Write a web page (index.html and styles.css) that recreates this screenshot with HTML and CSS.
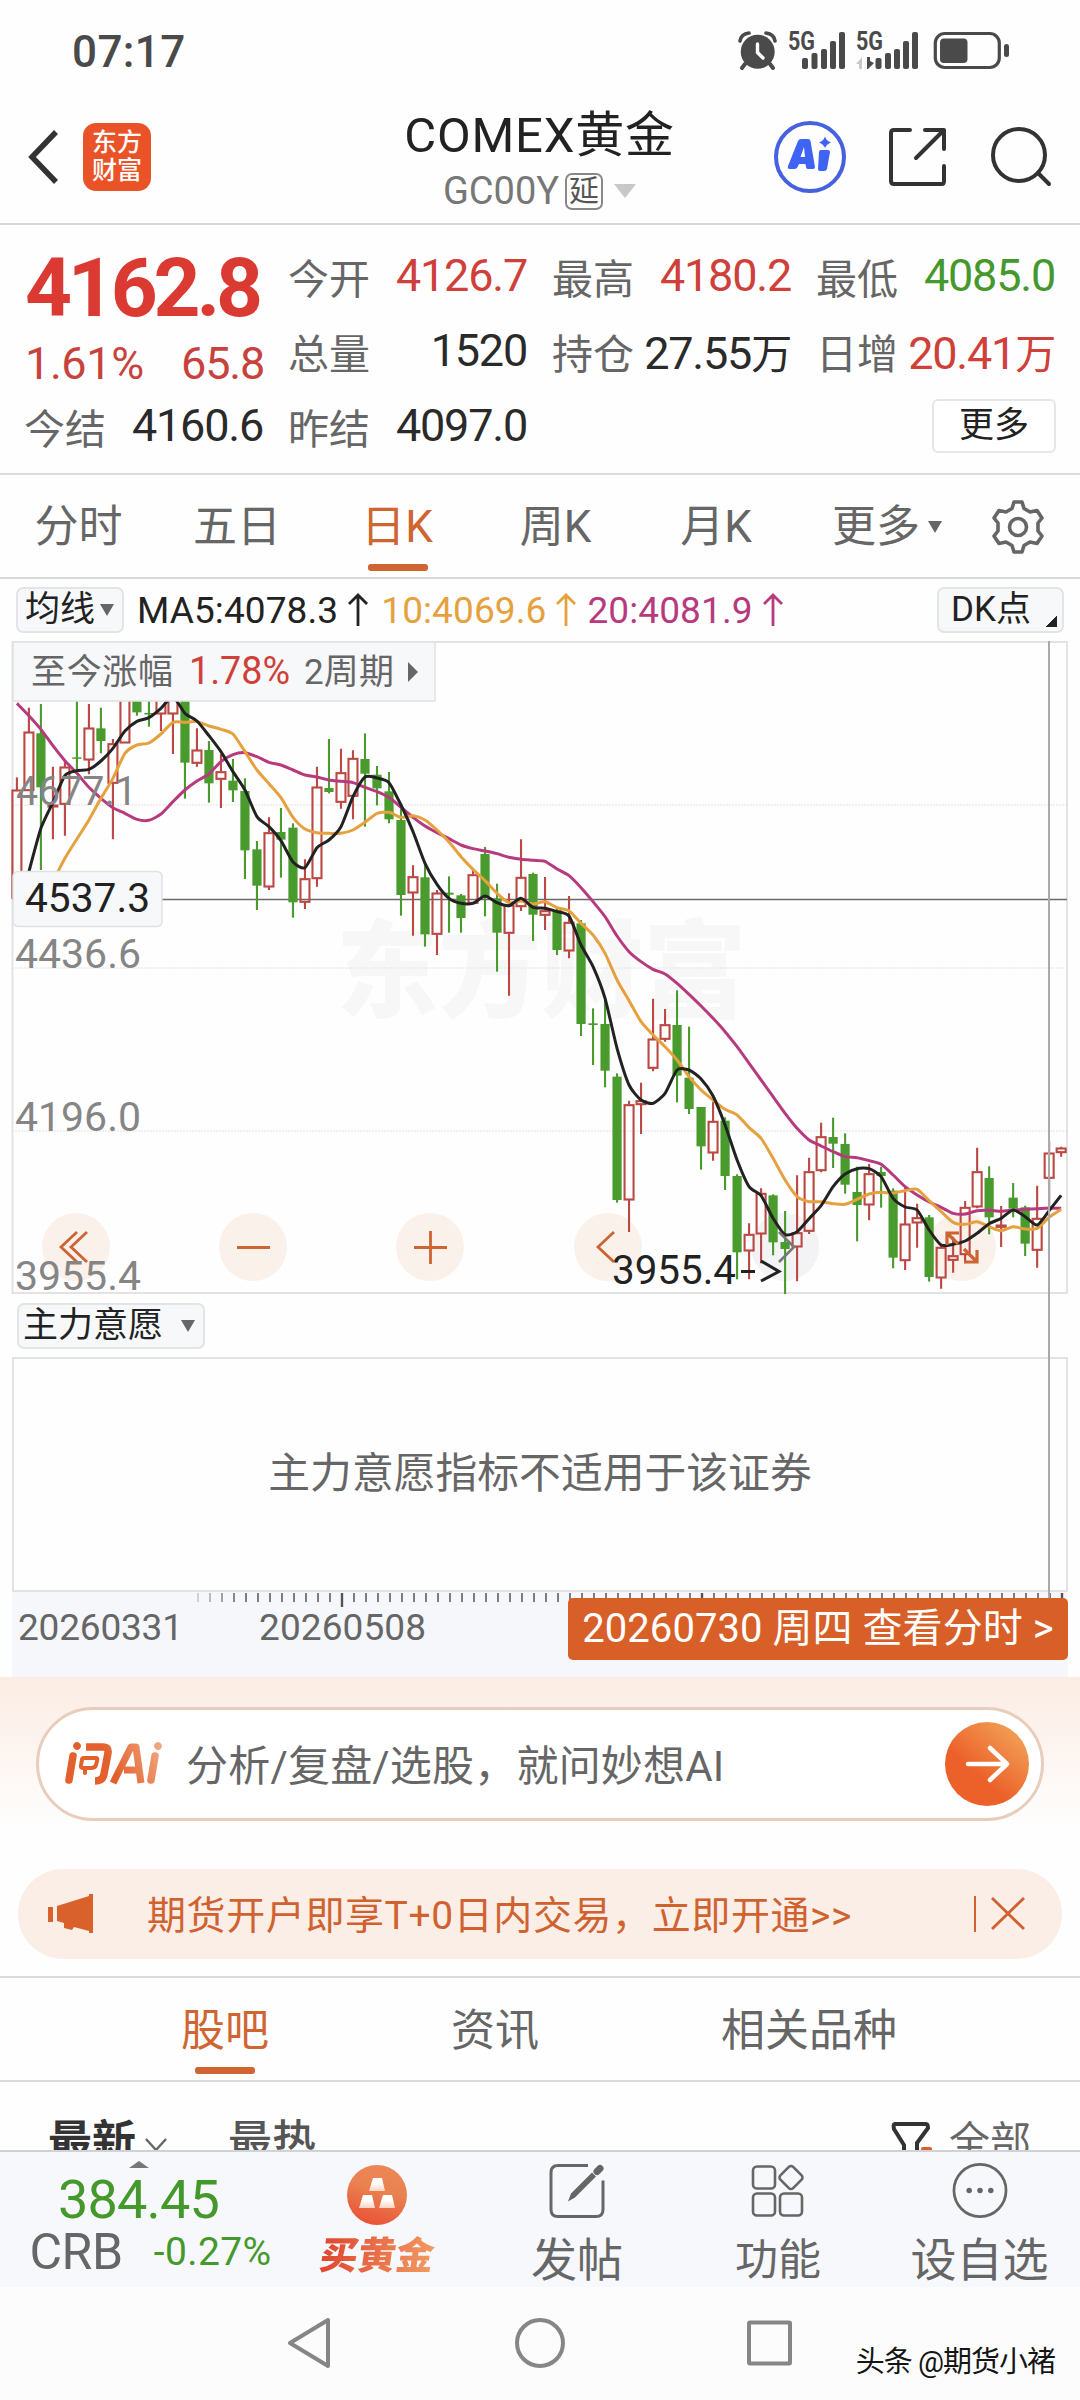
FILE: index.html
```html
<!DOCTYPE html>
<html lang="zh-CN">
<head>
<meta charset="utf-8">
<title>COMEX黄金</title>
<link rel="stylesheet" href="styles.css">
</head>
<body>
<div class="screen">
  <div class="status">
    <span class="clock">07:17</span>
    <svg class="status-icons" width="272" height="42" viewBox="0 0 272 42" fill="#4a4a4a">
      <circle cx="19.7" cy="21.7" r="17"/>
      <path d="M2 11Q3 4 11 3M37 11Q36 4 28 3" fill="none" stroke="#4a4a4a" stroke-width="3.6" stroke-linecap="round"/>
      <path d="M7 34L4 38M32 34L35 38" stroke="#4a4a4a" stroke-width="4" stroke-linecap="round"/>
      <path d="M19.5 14V22.5L25 28" fill="none" stroke="#fff" stroke-width="3.4" stroke-linecap="round"/>
      <text x="50" y="20" class="net" textLength="27" lengthAdjust="spacingAndGlyphs">5G</text>
      <rect x="64" y="28" width="6" height="11" rx="2"/><rect x="73.500" y="23" width="6" height="16" rx="2"/><rect x="83" y="19" width="6" height="20" rx="2"/><rect x="92" y="11" width="6" height="28" rx="2"/><rect x="101" y="2" width="6" height="37" rx="2"/>
      <text x="118" y="20" class="net" textLength="27" lengthAdjust="spacingAndGlyphs">5G</text>
      <path d="M118 34L124 27V39H121V34Z" fill="#c8c8c8"/><path d="M129 27H132V31L136 33L130 39H129Z"/>
      <rect x="137.500" y="28" width="6" height="11" rx="2"/><rect x="147" y="23" width="6" height="16" rx="2"/><rect x="156" y="19" width="6" height="20" rx="2"/><rect x="165" y="11" width="6" height="28" rx="2"/><rect x="174" y="2" width="6" height="37" rx="2"/>
      <rect x="197.300" y="3.500" width="64" height="34" rx="9.500" fill="none" stroke="#4a4a4a" stroke-width="3.200"/>
      <rect x="202" y="8.500" width="27.500" height="24.500" rx="4"/><rect x="266" y="14" width="5" height="13" rx="2.500"/>
    </svg>
  </div>

  <header class="header">
    <div class="header-left">
      <svg width="34" height="58" viewBox="0 0 34 58"><path d="M29 4L5 29L29 54" fill="none" stroke="#333" stroke-width="5.500"/></svg>
      <div class="brand"><span>东方</span><span>财富</span></div>
    </div>
    <div class="title">
      <h1>COMEX黄金</h1>
      <div class="code"><span class="code-text">GC00Y</span><span class="delay">延</span><i class="tri"></i></div>
    </div>
    <div class="header-right">
      <svg width="72" height="72" viewBox="0 0 72 72"><circle cx="36" cy="36" r="34" fill="none" stroke="#4561dd" stroke-width="4"/>
        <path fill="#3f63f3" fill-rule="evenodd" d="M24 20Q25 18 27 18H34Q36 18 36.500 20L41 46Q41 48 39 48H34Q32 48 32 46L31.500 43H25L23 47Q22 48 20 48H16Q13 48 14 45ZM30 26L26.500 36H31ZM47 29H54Q56 29 56 31L53 48Q52.500 50 50 50H46Q44 50 44 48L45 31Q45 29 47 29ZM51 15.500Q52.500 20 57 21.500Q52.500 23 51 27Q49.500 23 45 21.500Q49.500 20 51 15.500Z"/></svg>
      <svg width="62" height="62" viewBox="0 0 62 62" fill="none" stroke="#333" stroke-width="4" stroke-linecap="round" stroke-linejoin="round"><path d="M23 4H7Q4 4 4 7V55Q4 58 7 58H55Q57 58 57 55V40M38 4H57V23M56 5L29 32"/></svg>
      <svg width="62" height="62" viewBox="0 0 62 62" fill="none" stroke="#333" stroke-width="4" stroke-linecap="round"><circle cx="29" cy="29" r="26"/><path d="M48 47L59 58"/></svg>
    </div>
  </header>

  <section class="quote">
    <div class="last">
      <div class="price">4162.8</div>
      <div class="change"><span class="percent">1.61%</span><span>65.8</span></div>
    </div>
    <div class="cell"><span>今开</span><b class="up">4126.7</b></div>
    <div class="cell"><span>最高</span><b class="up">4180.2</b></div>
    <div class="cell"><span>最低</span><b class="down">4085.0</b></div>
    <div class="cell"><span>总量</span><b>1520</b></div>
    <div class="cell"><span>持仓</span><b>27.55<em>万</em></b></div>
    <div class="cell"><span>日增</span><b class="up">20.41<em>万</em></b></div>
    <div class="cell"><span>今结</span><b>4160.6</b></div>
    <div class="cell"><span>昨结</span><b>4097.0</b></div>
    <button class="more">更多</button>
  </section>

  <nav class="periods">
    <span>分时</span><span>五日</span><span class="on">日K</span><span>周K</span><span>月K</span>
    <span class="more-period">更多<i class="tri small"></i></span>
    <span class="gear"><svg width="56" height="56" viewBox="0 0 56 56" fill="none" stroke="#666" stroke-width="3.600" stroke-linejoin="round"><path d="M24 3H32L34 9.500L40 13L47 11.500L52 19L48 24V32L52 37L47 44.500L40 43L34 46.500L32 53H24L22 46.500L16 43L9 44.500L4 37L8 32V24L4 19L9 11.500L16 13L22 9.500Z"/><circle cx="28" cy="28" r="8.500"/></svg></span>
  </nav>

  <section class="chart">
    <div class="ma-row">
      <span class="pill">均线<i class="tri small"></i></span>
      <span class="ma ma5">MA5:4078.3<svg class="arrow" viewBox="0 0 20 34"><path d="M10 33V2M1 11L10 2L19 11"/></svg></span>
      <span class="ma ma10">10:4069.6<svg class="arrow" viewBox="0 0 20 34"><path d="M10 33V2M1 11L10 2L19 11"/></svg></span>
      <span class="ma ma20">20:4081.9<svg class="arrow" viewBox="0 0 20 34"><path d="M10 33V2M1 11L10 2L19 11"/></svg></span>
      <span class="pill dk">DK点<i class="corner"></i></span>
    </div>

    <svg class="kline" width="1080" height="654" viewBox="0 641 1080 654">
      <text x="336" y="1009" class="watermark" textLength="410" lengthAdjust="spacingAndGlyphs">东方财富</text>
      <g stroke="#ececec" stroke-width="1.500" stroke-dasharray="2 1"><path d="M12 805H1067M12 968H1067M12 1131H1067"/></g>
      <rect x="12.500" y="642" width="1054.500" height="651" fill="none" stroke="#e3e3e3" stroke-width="2"/>
      <g fill="#fbf1eb"><circle cx="76" cy="1247" r="34"/><circle cx="253" cy="1247" r="34"/><circle cx="430" cy="1247" r="34"/><circle cx="608" cy="1247" r="34"/><circle cx="962" cy="1247" r="34"/></g>
      <circle cx="785" cy="1247" r="34" fill="#f3f3f6"/>
      <path d="M12 899.500H1067" stroke="#6a6a6a" stroke-width="1.300"/>
      <g id="candles"></g>
      <g id="averages" fill="none" stroke-width="3" stroke-linejoin="round"></g>
      <g fill="none" stroke="#cc6433" stroke-width="2.800">
        <path d="M77 1232L61 1247L77 1262M87 1232L71 1247L87 1262M237 1247.500H270M414 1247.500H447M430.500 1231V1264M614 1232L598 1247L614 1262"/>
        <path d="M959 1233H947V1245M947 1233L958 1244M977 1250V1262H964M977 1262L964 1249" stroke-width="3.200"/>
      </g>
      <path d="M779 1232L794 1247L779 1262" fill="none" stroke="#777" stroke-width="2.600"/>
      <g class="axis">
        <text x="16" y="805" textLength="121" lengthAdjust="spacingAndGlyphs">4677.1</text>
        <text x="15" y="968" textLength="126" lengthAdjust="spacingAndGlyphs">4436.6</text>
        <text x="15" y="1131" textLength="126" lengthAdjust="spacingAndGlyphs">4196.0</text>
        <text x="15" y="1290" textLength="126" lengthAdjust="spacingAndGlyphs">3955.4</text>
      </g>
      <text x="612" y="1284" class="low" textLength="124" lengthAdjust="spacingAndGlyphs">3955.4</text>
      <path d="M741 1271.500H755M761 1261L779 1271.500L761 1281" fill="none" stroke="#222" stroke-width="3"/>
      <rect x="13" y="642" width="422" height="59" fill="#f7f8fa" stroke="#e0e1e3" stroke-width="1.500"/>
      <g class="gain">
        <text x="31" y="684" textLength="142">至今涨幅</text>
        <text x="189" y="684" class="gain-value" textLength="101" lengthAdjust="spacingAndGlyphs">1.78%</text>
        <text x="304" y="684" textLength="90">2周期</text>
      </g>
      <path d="M408 662L418 672L408 682Z" fill="#666"/>
      <rect x="13" y="871.500" width="149" height="55" rx="5" fill="#f7f8fa" stroke="#dfe1e5" stroke-width="1.500"/>
      <text x="25" y="912" class="cross-price" textLength="125" lengthAdjust="spacingAndGlyphs">4537.3</text>
    </svg>

    <div class="indicator-row"><span class="pill">主力意愿<i class="tri small"></i></span></div>
    <div class="sub-chart">主力意愿指标不适用于该证券</div>
    <div class="dates">
      <svg class="ticks" id="ticks" width="1055" height="20" viewBox="12 0 1055 20"></svg>
      <span class="date-first">20260331</span><span class="date-second">20260508</span>
      <span class="date-badge">20260730 周四 查看分时 &gt;</span>
    </div>
    <i class="crosshair"></i>
  </section>

  <section class="ask">
    <div class="ask-box">
      <svg width="124" height="52" viewBox="62 1738 124 52">
        <defs><linearGradient id="ask-ink" gradientUnits="userSpaceOnUse" x1="66" y1="1790" x2="165" y2="1738"><stop offset=".45" stop-color="#e35f2b"/><stop offset="1" stop-color="#f3b38e"/></linearGradient></defs>
        <g fill="none" stroke="url(#ask-ink)" stroke-width="7.500" stroke-linecap="round">
          <path d="M73 1756L69 1780M77 1746L77.100 1746.100"/>
          <path d="M86 1747H103Q109 1747 108 1753L104 1774Q103 1781 95 1781" stroke-linecap="butt"/>
          <path d="M84 1758H96Q98 1758 97 1761L96 1765Q95 1768 91 1768H83Q80 1768 81 1765L82 1760Q82 1758 84 1758ZM85 1768V1773" stroke-width="4"/>
          <path d="M113 1783L131 1747H136L141 1783M124 1770H139" stroke-width="7" stroke-linecap="butt" stroke-linejoin="round"/>
          <path d="M155 1756L151 1780M158 1746L158.100 1746.100"/>
        </g>
      </svg>
      <span class="ask-text">分析/复盘/选股，就问妙想AI</span>
      <svg class="go" width="84" height="84" viewBox="0 0 84 84"><defs><linearGradient id="go-fill" x1=".2" y1=".9" x2=".9" y2=".1"><stop offset=".3" stop-color="#ec6029"/><stop offset="1" stop-color="#f2a257"/></linearGradient></defs><circle cx="42" cy="42" r="42" fill="url(#go-fill)"/><path d="M23 42H61M45 26L62 42L45 58" fill="none" stroke="#fff" stroke-width="4.500" stroke-linecap="round" stroke-linejoin="round"/></svg>
    </div>
  </section>

  <section class="banner">
    <svg width="46" height="40" viewBox="0 0 46 40" fill="#d9612c"><path d="M0 13H5V28H0ZM9 12L41 2V0H45V39H41V37L26 33L24 36L16 34V29L9 27Z"/></svg>
    <span class="banner-text">期货开户即享T+0日内交易，立即开通&gt;&gt;</span>
    <i class="bar"></i>
    <svg width="34" height="32" viewBox="0 0 34 32"><path d="M1 0L33 31M33 0L1 31" stroke="#d0622f" stroke-width="2.800"/></svg>
  </section>

  <nav class="topics"><span class="on">股吧</span><span>资讯</span><span>相关品种</span></nav>

  <div class="filters">
    <b>最新</b><svg width="22" height="14" viewBox="0 0 22 14"><path d="M1 1L11 12L21 1" fill="none" stroke="#666" stroke-width="2.400"/></svg>
    <b class="hot">最热</b>
    <svg class="funnel" width="44" height="44" viewBox="0 0 44 44"><path d="M5 3H36Q38 3 38 7L27 22V42M5 3Q3 3 4 8L14 24V42" fill="none" stroke="#333" stroke-width="4"/><rect x="31" y="26" width="11" height="5" rx="2" fill="#d9612c"/></svg>
    <span>全部</span>
  </div>

  <footer class="toolbar">
    <div class="index"><i class="up-tri"></i><div class="index-value">384.45</div><div class="index-line"><span>CRB</span><em>-0.27%</em></div></div>
    <div class="tool gold"><svg width="60" height="60" viewBox="0 0 60 60"><defs><linearGradient id="gold-fill" x1=".3" y1="1" x2=".6" y2="0"><stop offset="0" stop-color="#ea5035"/><stop offset=".6" stop-color="#e98150"/><stop offset="1" stop-color="#ec8855"/></linearGradient><linearGradient id="bar-fill" x1="0" y1="0" x2="0" y2="1"><stop offset=".4" stop-color="#fff"/><stop offset="1" stop-color="#fbd3c0"/></linearGradient></defs><circle cx="30" cy="30" r="30" fill="url(#gold-fill)"/><g fill="url(#bar-fill)"><path d="M26 13H35L38 26H22Z"/><path d="M16 30H25L28 43H12Z"/><path d="M36 30H45L48 43H32Z"/></g></svg><span>买黄金</span></div>
    <div class="tool"><svg width="56" height="56" viewBox="0 0 56 56" fill="none" stroke="#666" stroke-width="3"><path d="M39 3H9Q2 3 2 10V47Q2 54 9 54H47Q54 54 54 47V18"/><path d="M19 39L22 31L43 10L47 14L26 35Z" fill="#666" stroke="none"/><path d="M48 9L51 6" stroke-width="7" stroke-linecap="round"/></svg><span>发帖</span></div>
    <div class="tool feature"><svg width="56" height="56" viewBox="0 0 56 56" fill="none" stroke="#666" stroke-width="2.600"><rect x="3" y="4" width="22" height="22" rx="4"/><rect x="3" y="31" width="22" height="22" rx="4"/><rect x="30" y="31" width="22" height="22" rx="4"/><rect x="32" y="6" width="18" height="18" rx="3" transform="rotate(45 41 15)"/></svg><span>功能</span></div>
    <div class="tool"><svg width="58" height="58" viewBox="0 0 58 58"><circle cx="29" cy="29" r="26.500" fill="none" stroke="#666" stroke-width="2.800"/><g fill="#666"><circle cx="18" cy="29" r="2.800"/><circle cx="29" cy="29" r="2.800"/><circle cx="40" cy="29" r="2.800"/></g></svg><span>设自选</span></div>
  </footer>

  <div class="system">
    <svg width="504" height="60" viewBox="288 2313 504 60" fill="none" stroke="#868686" stroke-width="4" stroke-linejoin="round"><path d="M328 2320V2366L290 2343Z"/><circle cx="540" cy="2343" r="23"/><rect x="749" y="2322.500" width="41" height="41" rx="1"/></svg>
    <span class="credit">头条 @期货小褚</span>
  </div>
</div>
<script src="chart.js"></script>
</body>
</html>
```
FILE: styles.css
```css
* { box-sizing: border-box; }
body { margin: 0; background: #fff; font-family: Roboto, "Noto Sans CJK SC", sans-serif; color: #222; }
i, em { font-style: normal; }
svg { display: block; flex: none; overflow: visible; }
.screen { width: 1080px; height: 2400px; overflow: hidden; display: flex; flex-direction: column; background: #fefefe; }
.screen > * { flex: none; }

.status { height: 100px; padding: 0 71px 0 72px; display: flex; justify-content: space-between; align-items: flex-start; }
.clock { font-size: 44px; font-weight: 500; line-height: 50px; margin-top: 27px; color: #4a4a4a; letter-spacing: .4px; }
.status-icons { margin-top: 30px; position: relative; left: 1px; }
.net { font-size: 25px; font-weight: 700; }

.header { height: 125px; border-bottom: 2px solid #d9d9d9; display: grid; grid-template-columns: 1fr auto 1fr; padding: 0 28px 0 27px; }
.header-left { display: flex; align-items: center; gap: 22px; padding-bottom: 9px; }
.brand { width: 68px; height: 68px; border-radius: 13px; background: #ea5328; color: #fff; font-size: 25px; font-weight: 500; line-height: 28px; display: flex; flex-direction: column; align-items: center; justify-content: center; }
.title { display: flex; flex-direction: column; align-items: center; }
h1 { margin: 8px 0 0; font-size: 49px; line-height: 56px; font-weight: 400; letter-spacing: .8px; }
.code { display: flex; align-items: center; height: 40px; margin-top: 7px; font-size: 38px; color: #777; }
.delay { width: 38px; height: 37px; border: 2px solid #888; border-radius: 7px; font-size: 30px; line-height: 32px; text-align: center; margin: 0 11px 0 6px; color: #555; }
.tri { border: 11px solid transparent; border-top: 14px solid #c8c8c8; border-bottom: 0; }
.tri.small { border-width: 12px 7px 0; border-top-color: #666; display: inline-block; }
.header-right { display: flex; align-items: center; justify-content: flex-end; gap: 41px; padding-bottom: 9px; }

.quote { height: 250px; border-bottom: 2px solid #dcdcdc; padding: 13px 24px 0 25px; display: grid; grid-template-columns: repeat(4, 239px); grid-auto-rows: 75px; column-gap: 25px; }
.last { grid-row: span 2; color: #da3a32; }
.price { font-size: 82px; font-weight: 700; line-height: 100px; letter-spacing: -4.2px; }
.change { display: flex; justify-content: space-between; font-size: 45px; line-height: 52px; letter-spacing: -1.2px; color: #c8423d; }
.percent { letter-spacing: -.4px; }
.cell { display: flex; justify-content: space-between; align-items: center; font-size: 45px; white-space: nowrap; }
.cell span { font-size: 41px; color: #666; margin-left: -1px; }
.cell b { font-weight: 400; color: #2a2a2a; letter-spacing: -1.2px; padding-right: 1px; }
.cell em { font-size: 41px; }
.cell b.up { color: #cf403b; }
.cell b.down { color: #45982c; }
.more { grid-column: 4; justify-self: end; align-self: center; width: 124px; height: 54px; border: 2px solid #e6e6e6; border-radius: 6px; background: #fff; padding: 0; font: 35px/48px Roboto, "Noto Sans CJK SC", sans-serif; color: #222; }

.periods { height: 104px; border-bottom: 2px solid #d9d9d9; display: grid; grid-template-columns: 157px 160px 160px 157px 164px 164px 112px; font-size: 44px; line-height: 104px; color: #666; text-align: center; }
.periods .on, .topics .on { color: #cf6530; position: relative; }
.periods .on::after, .topics .on::after { content: ""; position: absolute; left: calc(50% - 29px); bottom: 8px; width: 60px; height: 7px; border-radius: 3px; background: #cf6530; }
.more-period { display: flex; align-items: center; justify-content: flex-end; gap: 8px; padding-right: 20px; }
.gear { display: flex; align-items: center; justify-content: center; }

.chart { position: relative; }
.ma-row { height: 62px; padding: 0 16px; display: flex; align-items: center; }
.pill { height: 46px; border: 2px solid #e1e4e8; border-radius: 7px; background: #f7f8fa; font-size: 35px; line-height: 42px; display: flex; align-items: center; gap: 5px; padding: 0 8px 0 7px; }
.ma { display: flex; align-items: center; font-size: 37px; white-space: nowrap; letter-spacing: .1px; }
.ma5 { margin-left: 13px; }
.ma10 { margin-left: 13px; color: #e6a13f; }
.ma20 { margin-left: 11px; color: #b83a7e; }
.arrow { width: 20px; height: 34px; margin-left: 10px; fill: none; stroke: currentColor; stroke-width: 2.800px; }
.dk { margin-left: auto; width: 127px; padding: 0 5px 0 12px; justify-content: space-between; }
.corner { width: 11px; height: 11px; background: linear-gradient(135deg, transparent 50%, #222 50%); align-self: flex-end; margin-bottom: 4px; }
.kline text { font-size: 40px; }
.kline .watermark { font-size: 106px; font-weight: 900; fill: #f7f7f7; }
.axis { fill: #858585; }
.low, .cross-price { fill: #222; }
.kline .gain text { font-size: 35px; fill: #666; }
.kline .gain .gain-value { font-size: 38px; fill: #cf403b; }
.indicator-row { height: 62px; padding: 8px 0 0 17px; display: flex; }
.indicator-row .pill { gap: 18px; padding: 0 8px 0 4px; }
.sub-chart { margin: 0 12px; height: 235px; border: 2px solid #e3e3e3; font-size: 41.800px; line-height: 230px; text-align: center; color: #666; }
.dates { position: relative; margin: 0 12px; height: 85px; background: #f6f7fa; font-size: 37px; line-height: 44px; color: #666; display: flex; padding: 14px 0 0 6px; }
.ticks { position: absolute; left: 0; top: 0; }
.date-first { width: 241px; letter-spacing: -.2px; }
.date-second { letter-spacing: .1px; }
.date-badge { position: relative; margin: -8px 0 0 auto; width: 500px; height: 62px; border-radius: 5px; background: #d85f27; color: #fff; font-size: 40px; line-height: 62px; text-align: center; white-space: nowrap; letter-spacing: .05px; }
.crosshair { position: absolute; left: 1048px; top: 62px; width: 2px; height: 957px; background: #aaa; }

.ask { height: 165px; padding: 30px 36px 0; background: linear-gradient(#fcece4, #fefefe 90%); }
.ask-box { height: 114px; border: 3px solid #e8cdbd; border-radius: 57px; background: #fff; display: flex; align-items: center; padding: 0 12px 0 23px; }
.ask-text { font-size: 42px; color: #666; flex: 1; white-space: nowrap; letter-spacing: .2px; padding-bottom: 4px; }

.banner { margin: 27px 18px 0; height: 90px; border-radius: 45px; background: #faeee7; padding: 0 37px 0 30px; display: flex; align-items: center; }
.banner-text { flex: 1; margin-left: 53px; font-size: 39px; color: #d0622f; white-space: nowrap; letter-spacing: .6px; padding-bottom: 4px; }
.bar { width: 2px; height: 36px; background: #d0622f; margin-right: 15px; }

.topics { margin-top: 17px; height: 106px; border-top: 2px solid #dcdcdc; border-bottom: 2px solid #dcdcdc; display: grid; grid-template-columns: 300px 240px 388px; padding-left: 75px; text-align: center; font-size: 44px; line-height: 106px; color: #666; }
.topics .on::after { left: calc(50% - 30px); bottom: 10px; }

.filters { height: 68px; overflow: hidden; padding: 33px 49px 0 48px; display: flex; font-size: 44px; line-height: 54px; white-space: nowrap; color: #333; }
.filters b { font-weight: 700; }
.filters svg { margin: 23px 0 0 9px; }
.filters .hot { margin-left: 61px; font-weight: 500; color: #555; }
.filters .funnel { margin: 6px 15px 0 auto; }
.filters span { font-size: 41px; color: #666; }

.toolbar { height: 137px; border-top: 2px solid #cfd2d6; background: #f6f8fb; display: grid; grid-template-columns: 277px 200px 200px 202px 201px; color: #666; }
.index { display: flex; flex-direction: column; align-items: center; }
.up-tri { border: 10px solid transparent; border-top: 0; border-bottom: 7px solid #777; margin-top: 9px; }
.index-value { font-size: 54px; line-height: 60px; margin-top: 2px; color: #45982c; letter-spacing: -.8px; }
.index-line { display: flex; align-items: center; gap: 31px; font-size: 50px; line-height: 40px; letter-spacing: -.4px; margin: 2px 0 0 24px; }
.index-line em { font-size: 39px; color: #45982c; letter-spacing: .4px; }
.tool { display: flex; flex-direction: column; align-items: center; padding-top: 10px; font-size: 46px; line-height: 60px; white-space: nowrap; }
.tool svg { height: 57px; }
.tool span { margin-top: 11px; }
.feature { font-size: 43px; }
.gold { padding-top: 13px; }
.gold svg { height: 60px; }
.gold span { font-size: 38px; font-weight: 900; line-height: 46px; margin-top: 8px; transform: skewX(-8deg); background: linear-gradient(90deg, #e0452f, #f29a62); -webkit-background-clip: text; background-clip: text; color: transparent; }

.system { position: relative; height: 113px; background: #fcfcfc; display: flex; justify-content: center; padding-top: 26px; }
.credit { position: absolute; right: 25px; top: 55px; font-size: 29px; line-height: 40px; color: #151515; letter-spacing: -1px; text-shadow: -1px -1px 0 #fff; white-space: nowrap; }
```
FILE: chart.js
```js
// Candles: direction, high, body top, body bottom, low. Heights are in thirds of a pixel below ORIGIN.
const ORIGIN = 570, FIRST = 16.9, STEP = 12.003;
const candles = `r622,660,985,985 r413,486,662,662 g402,490,652,900 r590,705,710,808 r575,591,703,797 g380,562,566,603 r402,474,570,613 g413,475,513,550
r507,521,640,808 r380,380,519,519 g380,380,427,437 g380,429,432,470 r380,380,432,483 r380,380,432,552 g380,380,578,686 r475,540,580,590
g513,540,640,698 r552,605,628,714 g567,632,661,696 g625,663,841,927 g813,838,947,1020 r742,788,951,960 g714,786,809,923 g760,773,997,1043
r868,926,997,1017 r590,651,926,950 g507,654,666,670 r536,608,697,716 r541,565,679,748 g490,567,611,770 g588,614,655,706 g606,664,748,760
g700,750,975,1037 r886,920,969,1097 g880,922,1093,1130 r960,969,1093,1155 g919,968,974,1088 g972,976,1044,1088 r895,914,1000,1002 g831,852,984,1039
g941,985,1088,1205 r970,1005,1090,1277 r808,922,1010,1023 g908,912,1034,1113 r921,1022,1036,1080 g1015,1020,1140,1155 r978,1057,1143,1165 g1050,1060,1362,1398
g1315,1360,1365,1485 g1280,1362,1502,1552 g1510,1520,1890,1898 r1592,1604,1890,1986 r1538,1592,1604,1692 r1286,1407,1495,1504 r1317,1364,1408,1415 g1261,1365,1517,1597
g1370,1523,1617,1632 g1611,1611,1729,1799 r1595,1654,1749,1772 g1642,1652,1818,1860 g1813,1818,2047,2128 r1960,1993,2043,2128 r1855,1870,1992,2080 g1873,1876,2017,2056
g1923,2016,2037,2172 r1816,1988,2031,2134 r1763,1805,1984,1992 r1658,1700,1802,1807 g1643,1701,1721,1794 g1690,1722,1844,1871 g1790,1866,1905,2014 r1782,1811,1905,1951
g1790,1806,1818,1913 g1855,1862,2063,2095 r1850,1962,2072,2100 r1901,1943,1959,2033 g1935,1942,2121,2135 r2023,2032,2124,2156 r2000,2057,2071,2108 r1893,1912,2054,2080
r1733,1805,1911,1915 g1789,1824,1942,1993 r1908,1965,1972,2031 g1839,1883,1916,1942 g1907,1912,2021,2058 r1847,1945,2041,2093 r1715,1749,1825,1915 r1730,1734,1748,1760`
  .split(/\s+/).map(s => [s[0], ...s.slice(1).split(',').map(Number)]);

const averages = [
  ['#b83a7e', 0, [400,437,478,527,572,610,652,685,713,730,748,751,732,695,660,633,612,575,554,548,560,577,585,600,615,621,630,634,638,652,665,682,712,742,768,788,806,825,836,843,851,862,868,871,874,897,917,953,995,1040,1098,1145,1175,1198,1212,1240,1273,1308,1345,1385,1430,1480,1530,1580,1630,1675,1710,1728,1745,1760,1763,1772,1783,1815,1850,1875,1896,1912,1930,1932,1922,1921,1924,1920,1918,1916,1914,1915]],
  ['#e6a13f', 3, [935,865,807,750,685,625,550,525,519,492,457,457,455,468,478,492,545,600,641,683,742,777,788,790,790,780,757,730,727,742,737,750,780,816,860,898,932,970,998,993,1002,995,1013,1023,1060,1095,1150,1230,1292,1355,1395,1430,1470,1520,1560,1590,1618,1635,1673,1705,1765,1830,1880,1895,1895,1901,1903,1888,1872,1867,1869,1862,1858,1892,1925,1957,1963,1955,1970,1982,1970,1977,1975,1942,1918]],
  ['#222', 1, [905,775,697,617,602,598,573,535,483,454,443,415,380,430,453,497,545,605,660,740,770,812,876,893,833,810,770,680,621,624,638,705,785,880,943,985,1000,1000,978,998,1007,985,1012,1015,1025,1038,1125,1190,1285,1435,1545,1590,1600,1570,1500,1500,1527,1578,1665,1770,1850,1877,1945,1994,1985,1946,1907,1850,1812,1796,1796,1820,1885,1911,1920,1980,2025,2023,2013,1990,1961,1945,1920,1940,1965,1922,1876]]
];

const x = i => FIRST + i * STEP;
const y = v => ORIGIN + v / 3;

document.getElementById('candles').innerHTML = candles.map(([dir, high, top, bottom, low], i) => {
  const c = x(i), t = y(top), b = y(bottom);
  if (dir === 'g') {
    return `<path d="M${c} ${y(high)}V${y(low)}" stroke="#4a9b2e" stroke-width="2.1"/>` +
      `<rect x="${c - 4.6}" y="${t}" width="9.2" height="${Math.max(b - t, 1.5)}" fill="#4a9b2e"/>`;
  }
  return `<path d="M${c} ${y(high)}V${t}M${c} ${b}V${y(low)}" stroke="#bb4843" stroke-width="2.1"/>` +
    `<rect x="${c - 4.5}" y="${t + 0.5}" width="9" height="${Math.max(b - t - 1, 1)}" fill="none" stroke="#bb4843" stroke-width="2.1"/>`;
}).join('');

// A smooth curve through each point of an average.
function curve(points) {
  let d = `M${points[0]}`;
  for (let i = 0; i < points.length - 1; i++) {
    const a = points[i - 1] || points[i], p = points[i], q = points[i + 1], z = points[i + 2] || q;
    d += `C${p[0] + (q[0] - a[0]) / 9} ${p[1] + (q[1] - a[1]) / 9} ${q[0] - (z[0] - p[0]) / 9} ${q[1] - (z[1] - p[1]) / 9} ${q}`;
  }
  return d;
}
document.getElementById('averages').innerHTML = averages.map(([color, start, values]) =>
  `<path stroke="${color}" d="${curve(values.map((v, i) => [x(start + i), y(v)]))}"/>`).join('');

let marks = '';
for (let i = 0; i < 73; i++) {
  const tall = i === 12 || i === 42 || i === 72;
  marks += `<path d="M${198 + i * 12} 1V${tall ? 15 : 10}" stroke="#555" stroke-width="${tall ? 2.4 : 1.5}" opacity="${Math.min(1, 0.3 + i * 0.2)}"/>`;
}
document.getElementById('ticks').innerHTML = marks;
```
